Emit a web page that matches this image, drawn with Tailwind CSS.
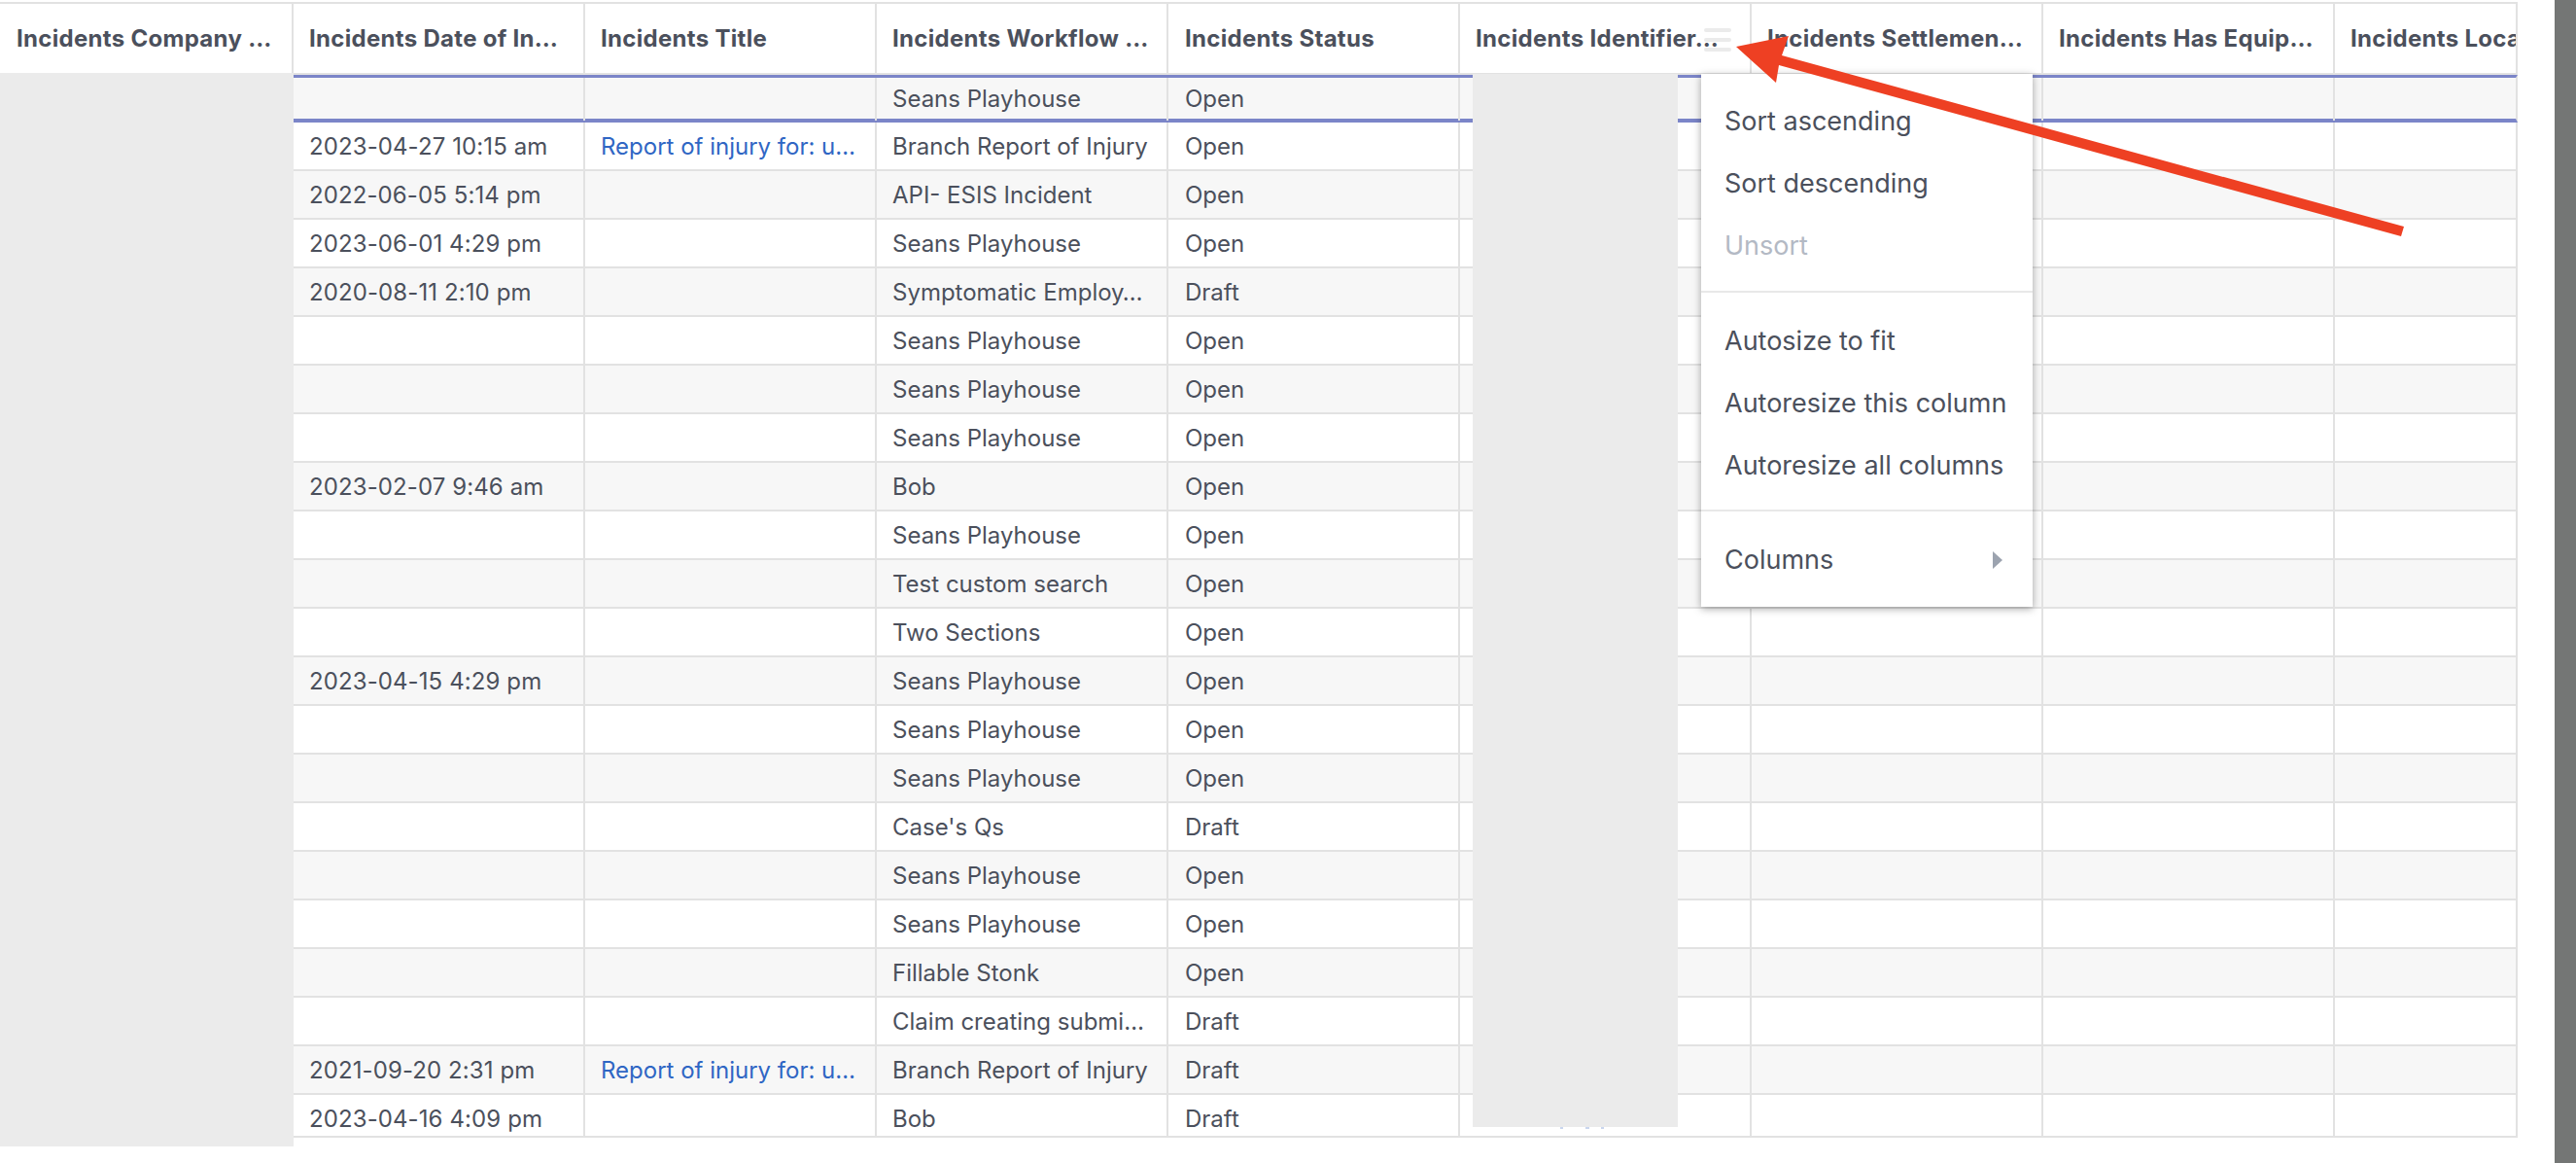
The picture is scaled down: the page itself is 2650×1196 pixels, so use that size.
<!DOCTYPE html>
<html lang="en">
<head>
    <meta charset="UTF-8">
    <title>Incidents</title>
    <script src="https://cdn.jsdelivr.net/npm/@tailwindcss/browser@4"></script>
</head>
<body class="bg-white">
<div class="relative w-[2650px] h-[1196px] overflow-hidden pt-[2px] flex font-['Inter',sans-serif] text-[#4b505c]">

    <div class="w-[2590px]">
        <!-- header -->
        <div class="border-t-2 border-b-2 border-[#e2e2e2] border-r-2 h-[75px] grid grid-cols-[302px_repeat(7,300px)_186px] text-[24px] leading-[71px] font-bold tracking-[0.3px]">
            <div class="border-r-2 border-[#e2e2e2] pl-[17px] whitespace-nowrap overflow-hidden">Incidents Company …</div>
            <div class="border-r-2 border-[#e2e2e2] pl-[16px] whitespace-nowrap overflow-hidden">Incidents Date of In…</div>
            <div class="border-r-2 border-[#e2e2e2] pl-[16px] whitespace-nowrap overflow-hidden">Incidents Title</div>
            <div class="border-r-2 border-[#e2e2e2] pl-[16px] whitespace-nowrap overflow-hidden">Incidents Workflow …</div>
            <div class="border-r-2 border-[#e2e2e2] pl-[17px] whitespace-nowrap overflow-hidden">Incidents Status</div>
            <div class="relative border-r-2 border-[#e2e2e2] pl-[16px] whitespace-nowrap">
                Incidents Identifier…
                <div class="absolute left-[251px] top-[25px] w-[28px] flex flex-col gap-[6px]">
                    <div class="h-[4px] rounded-full bg-[#ebebeb]"></div>
                    <div class="h-[4px] rounded-full bg-[#ebebeb]"></div>
                    <div class="h-[4px] rounded-full bg-[#ebebeb]"></div>
                </div>
            </div>
            <div class="border-r-2 border-[#e2e2e2] pl-[16px] whitespace-nowrap overflow-hidden">Incidents Settlemen…</div>
            <div class="border-r-2 border-[#e2e2e2] pl-[16px] whitespace-nowrap overflow-hidden">Incidents Has Equip…</div>
            <div class="pl-[16px] whitespace-nowrap overflow-hidden">Incidents Location</div>
        </div>

        <!-- pinned row -->
        <div class="h-[49px] bg-[#f7f7f7] border-y-[3px] border-[#7b85c8] border-b-4 border-r-2 border-r-[#e2e2e2] grid grid-cols-[302px_repeat(7,300px)_186px] text-[24px] leading-[44px]">
            <div class="border-r-2 border-[#e2e2e2]"></div>
            <div class="border-r-2 border-[#e2e2e2]"></div>
            <div class="border-r-2 border-[#e2e2e2]"></div>
            <div class="border-r-2 border-[#e2e2e2] pl-[16px]">Seans Playhouse</div>
            <div class="border-r-2 border-[#e2e2e2] pl-[17px]">Open</div>
            <div class="border-r-2 border-[#e2e2e2]"></div>
            <div class="border-r-2 border-[#e2e2e2]"></div>
            <div class="border-r-2 border-[#e2e2e2]"></div>
            <div></div>
        </div>

        <!-- rows, filled in below -->
        <div id="rows" class="h-[1044px] overflow-hidden border-b-2 border-[#e2e2e2] text-[24px]"></div>
    </div>

    <!-- dark strip on the right edge -->
    <div class="absolute right-0 top-0 w-[22px] h-full bg-[#747675]"></div>

    <!-- redacted blocks -->
    <div class="absolute left-0 top-[75px] w-[302px] h-[1104px] bg-[#ebebeb]"></div>
    <div class="absolute left-[1515px] top-[76px] w-[211px] h-[1083px] bg-[#ebebeb]"></div>
    <div class="absolute left-[1605px] top-[1159px] w-[3px] h-[2px] bg-[#c9d6ee]"></div>
    <div class="absolute left-[1631px] top-[1159px] w-[4px] h-[2px] bg-[#c9d6ee]"></div>
    <div class="absolute left-[1647px] top-[1159px] w-[3px] h-[2px] bg-[#c9d6ee]"></div>

    <!-- column menu -->
    <div class="absolute left-[1750px] top-[76px] w-[341px] h-[548px] bg-white shadow-[0_2px_8px_rgba(0,0,0,0.35)] text-[27px] leading-[64px]">
        <div class="h-[225px] pt-[17px] border-b-2 border-[#e8e8e8] px-[24px]">
            <div>Sort ascending</div>
            <div>Sort descending</div>
            <div class="text-[#b3b9c4]">Unsort</div>
        </div>
        <div class="h-[225px] pt-[18px] border-b-2 border-[#e8e8e8] px-[24px]">
            <div>Autosize to fit</div>
            <div>Autoresize this column</div>
            <div>Autoresize all columns</div>
        </div>
        <div class="pt-[18px] px-[24px] flex justify-between items-center">
            <div>Columns</div>
            <svg width="10" height="18" viewBox="0 0 10 18" class="mr-[7px]"><path d="M0 0 L10 9 L0 18 Z" fill="#9ca3af"/></svg>
        </div>
    </div>

    <!-- red annotation arrow -->
    <svg class="absolute left-0 top-0" width="2650" height="1196" viewBox="0 0 2650 1196">
        <path d="M1786 48 L1840 37 L1833 57 L2473 233 L2470 243 L1830 67 L1827 85 Z" fill="#ee4023"/>
    </svg>
</div>

<script>
    const rows = [
        ["2023-04-27 10:15 am", "Report of injury for: u…", "Branch Report of Injury", "Open"],
        ["2022-06-05 5:14 pm", "", "API- ESIS Incident", "Open"],
        ["2023-06-01 4:29 pm", "", "Seans Playhouse", "Open"],
        ["2020-08-11 2:10 pm", "", "Symptomatic Employ…", "Draft"],
        ["", "", "Seans Playhouse", "Open"],
        ["", "", "Seans Playhouse", "Open"],
        ["", "", "Seans Playhouse", "Open"],
        ["2023-02-07 9:46 am", "", "Bob", "Open"],
        ["", "", "Seans Playhouse", "Open"],
        ["", "", "Test custom search", "Open"],
        ["", "", "Two Sections", "Open"],
        ["2023-04-15 4:29 pm", "", "Seans Playhouse", "Open"],
        ["", "", "Seans Playhouse", "Open"],
        ["", "", "Seans Playhouse", "Open"],
        ["", "", "Case's Qs", "Draft"],
        ["", "", "Seans Playhouse", "Open"],
        ["", "", "Seans Playhouse", "Open"],
        ["", "", "Fillable Stonk", "Open"],
        ["", "", "Claim creating submi…", "Draft"],
        ["2021-09-20 2:31 pm", "Report of injury for: u…", "Branch Report of Injury", "Draft"],
        ["2023-04-16 4:09 pm", "", "Bob", "Draft"]
    ]

    let html = ""
    rows.forEach((r, i) => {
        const bg = i % 2 == 0 ? "bg-white" : "bg-[#f7f7f7]"
        html += `<div class="${bg} h-[50px] border-b-2 border-r-2 border-[#e2e2e2] grid grid-cols-[302px_repeat(7,300px)_186px] leading-[50px]">
            <div class="border-r-2 border-[#e2e2e2]"></div>
            <div class="border-r-2 border-[#e2e2e2] pl-[16px] whitespace-nowrap tracking-[0.1px]">${r[0]}</div>
            <div class="border-r-2 border-[#e2e2e2] pl-[16px] whitespace-nowrap text-[#2f66c4]">${r[1]}</div>
            <div class="border-r-2 border-[#e2e2e2] pl-[16px] whitespace-nowrap">${r[2]}</div>
            <div class="border-r-2 border-[#e2e2e2] pl-[17px]">${r[3]}</div>
            <div class="border-r-2 border-[#e2e2e2]"></div>
            <div class="border-r-2 border-[#e2e2e2]"></div>
            <div class="border-r-2 border-[#e2e2e2]"></div>
            <div></div>
        </div>`
    })
    document.getElementById("rows").innerHTML = html
</script>
</body>
</html>
